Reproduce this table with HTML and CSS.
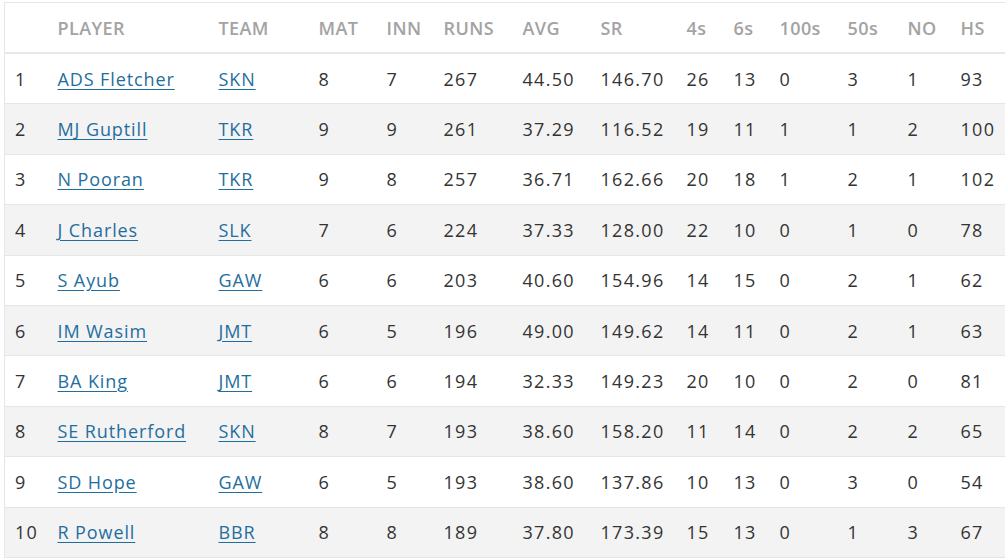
FILE: index.html
```html
<!DOCTYPE html>
<html>
<head>
<meta charset="utf-8">
<link rel="stylesheet" href="styles.css">
</head>
<body>
<div class="wrap">
<table class="stats">
<colgroup>
<col class="c-pos"><col class="c-player"><col class="c-team"><col class="c-mat"><col class="c-inn"><col class="c-runs"><col class="c-avg"><col class="c-sr"><col class="c-4s"><col class="c-6s"><col class="c-100"><col class="c-50"><col class="c-no"><col class="c-hs">
</colgroup>
<thead>
<tr><th></th><th>PLAYER</th><th>TEAM</th><th>MAT</th><th>INN</th><th>RUNS</th><th>AVG</th><th>SR</th><th>4s</th><th>6s</th><th>100s</th><th>50s</th><th>NO</th><th>HS</th></tr>
</thead>
<tbody>
<tr><td>1</td><td><a href="#">ADS Fletcher</a></td><td><a href="#">SKN</a></td><td>8</td><td>7</td><td>267</td><td>44.50</td><td>146.70</td><td>26</td><td>13</td><td>0</td><td>3</td><td>1</td><td>93</td></tr>
<tr><td>2</td><td><a href="#">MJ Guptill</a></td><td><a href="#">TKR</a></td><td>9</td><td>9</td><td>261</td><td>37.29</td><td>116.52</td><td>19</td><td>11</td><td>1</td><td>1</td><td>2</td><td>100</td></tr>
<tr><td>3</td><td><a href="#">N Pooran</a></td><td><a href="#">TKR</a></td><td>9</td><td>8</td><td>257</td><td>36.71</td><td>162.66</td><td>20</td><td>18</td><td>1</td><td>2</td><td>1</td><td>102</td></tr>
<tr><td>4</td><td><a href="#">J Charles</a></td><td><a href="#">SLK</a></td><td>7</td><td>6</td><td>224</td><td>37.33</td><td>128.00</td><td>22</td><td>10</td><td>0</td><td>1</td><td>0</td><td>78</td></tr>
<tr><td>5</td><td><a href="#">S Ayub</a></td><td><a href="#">GAW</a></td><td>6</td><td>6</td><td>203</td><td>40.60</td><td>154.96</td><td>14</td><td>15</td><td>0</td><td>2</td><td>1</td><td>62</td></tr>
<tr><td>6</td><td><a href="#">IM Wasim</a></td><td><a href="#">JMT</a></td><td>6</td><td>5</td><td>196</td><td>49.00</td><td>149.62</td><td>14</td><td>11</td><td>0</td><td>2</td><td>1</td><td>63</td></tr>
<tr><td>7</td><td><a href="#">BA King</a></td><td><a href="#">JMT</a></td><td>6</td><td>6</td><td>194</td><td>32.33</td><td>149.23</td><td>20</td><td>10</td><td>0</td><td>2</td><td>0</td><td>81</td></tr>
<tr><td>8</td><td><a href="#">SE Rutherford</a></td><td><a href="#">SKN</a></td><td>8</td><td>7</td><td>193</td><td>38.60</td><td>158.20</td><td>11</td><td>14</td><td>0</td><td>2</td><td>2</td><td>65</td></tr>
<tr><td>9</td><td><a href="#">SD Hope</a></td><td><a href="#">GAW</a></td><td>6</td><td>5</td><td>193</td><td>38.60</td><td>137.86</td><td>10</td><td>13</td><td>0</td><td>3</td><td>0</td><td>54</td></tr>
<tr><td>10</td><td><a href="#">R Powell</a></td><td><a href="#">BBR</a></td><td>8</td><td>8</td><td>189</td><td>37.80</td><td>173.39</td><td>15</td><td>13</td><td>0</td><td>1</td><td>3</td><td>67</td></tr>
</tbody>
</table>
</div>
</body>
</html>
```

FILE: styles.css
```css
html, body {
  margin: 0;
  padding: 0;
  background: #ffffff;
  overflow: hidden;
}

.wrap {
  padding: 2px 0 0 4px;
}

.stats {
  border-collapse: collapse;
  table-layout: fixed;
  width: 1020px;
  font-family: "Open Sans", "Noto Sans", sans-serif;
  font-size: 18px;
  color: #333333;
  border: 1px solid #e6e6e6;
}

.c-pos { width: 43px; }
.c-player { width: 161px; }
.c-team { width: 100px; }
.c-mat { width: 68px; }
.c-inn { width: 57px; }
.c-runs { width: 79px; }
.c-avg { width: 78px; }
.c-sr { width: 86px; }
.c-4s { width: 47px; }
.c-6s { width: 46px; }
.c-100 { width: 68px; }
.c-50 { width: 60px; }
.c-no { width: 53px; }
.c-hs { width: auto; }

.stats th,
.stats td {
  text-align: left;
  vertical-align: middle;
  padding: 0 0 0 10px;
  white-space: nowrap;
}

.stats th {
  height: 49px;
  font-weight: 600;
  color: #a3a3a3;
  font-size: 18px;
  letter-spacing: 0.4px;
  border-bottom: 2px solid #e8e8e8;
}

.stats td {
  height: 49.4px;
  border-top: 1px solid #e6e6e6;
  letter-spacing: 1.3px;
}

.stats tbody tr:nth-child(even) {
  background: #f3f3f3;
}

.stats a {
  color: #1f6e9e;
  letter-spacing: 0.9px;
  text-decoration: underline;
  text-underline-offset: 3px;
}
```
